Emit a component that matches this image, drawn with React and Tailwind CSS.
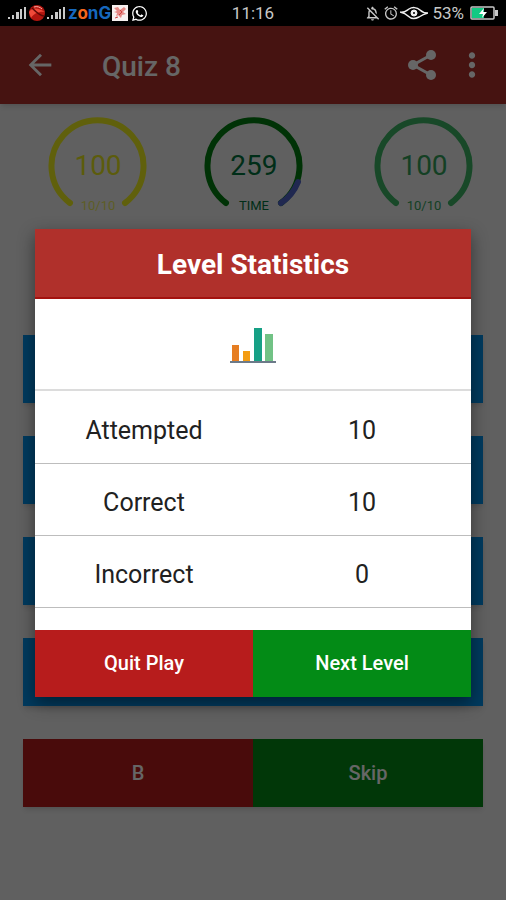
import React from "react";
import { MdAlarm, MdArrowBack, MdMoreVert, MdOutlineNotificationsOff } from "react-icons/md";
import { FaWhatsapp } from "react-icons/fa";

const gauges = [
  { value: "100", label: "10/10", color: "#f0f01e", textClass: "text-[#e6e61e]", labelClass: "opacity-70" },
  { value: "259", label: "TIME", color: "#007d0f", textClass: "text-[#00733c]", labelClass: "", rest: "#5064c8" },
  { value: "100", label: "10/10", color: "#3cb464", textClass: "text-[#32a05a]", labelClass: "" },
];

const stats = [
  { name: "Attempted", value: 10 },
  { name: "Correct", value: 10 },
  { name: "Incorrect", value: 0 },
];

const answers = ["A", "B", "C", "D"];

const Signal = () => (
  <svg viewBox="0 0 20 14" className="w-5 h-[14px]" fill="#c8c8c8">
    <rect x="1" y="11" width="2" height="2" />
    <rect x="5" y="9" width="2" height="4" />
    <rect x="9" y="6" width="3" height="7" />
    <rect x="13" y="3" width="2" height="10" />
    <rect x="17" y="1" width="2" height="12" />
  </svg>
);

const StatusBar = () => (
  <div className="relative h-[26px] bg-black text-[#c8c8c8] flex items-center justify-between pl-[7px] pr-2 shrink-0">
    <div className="flex items-center">
      <Signal />
      <svg viewBox="0 0 18 18" className="w-[18px] h-[18px] ml-px">
        <circle cx="9" cy="9" r="8" fill="#b3150f" />
        <path d="M1 8C5 3 10 4 17 8C12 7 6 9 3 14Z" fill="#f04a3a" />
        <path d="M4 4C8 8 12 12 16 12" stroke="#5d0805" strokeWidth="1.5" fill="none" />
        <path d="M6 3C9 2 12 3 14 5" stroke="#ffb4a8" strokeWidth="1" fill="none" />
      </svg>
      <Signal />
      <span className="ml-[2px] w-[43px] text-[17px] leading-5 font-bold text-[#1668bd] font-['Inter',sans-serif]">
        z<span className="text-[#f4661e]">o</span>nG
      </span>
      <svg viewBox="0 0 16 16" className="w-4 h-4 ml-px">
        <rect width="16" height="16" fill="#f6f0ef" />
        <path d="M2 3L6 2L8 5L12 2L14 4L11 7L14 9L10 10L9 13L6 10L4 12L5 8L2 7L5 6Z" fill="#e58a86" />
        <path d="M8 5L10 7L7 10M3 13L6 12" stroke="#cf3f3d" strokeWidth="1" fill="none" />
      </svg>
      <FaWhatsapp className="ml-[3px] text-white" size={17} />
    </div>
    <span className="absolute left-1/2 -translate-x-1/2 text-[17px] leading-5">11:16</span>
    <div className="flex items-center">
      <MdOutlineNotificationsOff size={17} />
      <MdAlarm size={16} className="ml-[2px]" />
      <svg viewBox="0 0 28 14" className="w-7 h-[14px] ml-px" fill="none" stroke="#f0f0f0">
        <path d="M0 6C4 7 6 5 9 3C12 1 17 1 20 4C22 6 25 7 28 7C24 8 22 9 19 11C15 13 11 13 8 10C6 8 4 7 0 6Z" strokeWidth="1.5" />
        <circle cx="14" cy="7" r="3" fill="#f0f0f0" />
        <circle cx="14" cy="7" r="1" fill="#000" stroke="none" />
      </svg>
      <span className="ml-1 text-[17px] leading-5">53%</span>
      <svg viewBox="0 0 28 14" className="w-7 h-[14px] ml-[6px]">
        <rect x="1" y="1" width="23" height="12" rx="1" fill="none" stroke="#c8c8c8" strokeWidth="1.5" />
        <rect x="25" y="4" width="3" height="6" fill="#c8c8c8" />
        <rect x="2" y="2" width="12" height="10" fill="#12c983" />
        <path d="M14 2L9 8H13L12 12L17 6H13Z" fill="#fff" />
      </svg>
    </div>
  </div>
);

const ShareIcon = () => (
  <svg viewBox="0 0 30 32" className="w-[30px] h-8" fill="currentColor" stroke="currentColor">
    <path d="M24 6L6 16L24 26" fill="none" strokeWidth="3" />
    <circle cx="6" cy="16" r="5" stroke="none" />
    <circle cx="24" cy="6" r="5" stroke="none" />
    <circle cx="24" cy="26" r="5" stroke="none" />
  </svg>
);

const Gauge = ({ gauge }) => (
  <div className={`relative w-[100px] h-[100px] flex items-center justify-center ${gauge.textClass}`}>
    <svg viewBox="0 0 100 100" className="absolute inset-0 w-full h-full" fill="none" strokeWidth="6" strokeLinecap="round">
      <path d="M22 87A46 46 0 1 1 77 87" stroke={gauge.color} />
      {gauge.rest && <path d="M94 66A46 46 0 0 1 77 87" stroke={gauge.rest} />}
    </svg>
    <span className="text-[28px] leading-8">{gauge.value}</span>
    <span className={`absolute bottom-[2px] inset-x-0 text-center text-[13px] leading-4 ${gauge.labelClass}`}>
      {gauge.label}
    </span>
  </div>
);

const ChartIcon = () => (
  <svg viewBox="0 0 46 38" className="w-[46px] h-[38px]">
    <rect x="2" y="18" width="7" height="17" fill="#e67e22" />
    <rect x="13" y="24" width="7" height="11" fill="#f39c12" />
    <rect x="24" y="1" width="8" height="34" fill="#16a085" />
    <rect x="35" y="7" width="8" height="28" fill="#71c285" />
    <rect x="0" y="34" width="46" height="2" fill="#6c7a89" />
  </svg>
);

const StatsDialog = () => (
  <div role="dialog" aria-labelledby="stats-title" className="w-full shadow-[0_6px_16px_rgba(0,0,0,0.45)]">
    <h2 id="stats-title" className="h-[70px] flex items-center justify-center pt-2 pb-1 bg-[#b0302b] border-b-2 border-[#a3120f] text-white text-[28px] leading-8 font-bold">
      Level Statistics
    </h2>
    <div className="bg-white">
      <div className="h-[92px] flex items-center justify-center pt-1 border-b-2 border-[#dcdcdc]">
        <ChartIcon />
      </div>
      <table className="w-full table-fixed text-center text-[25px] leading-8 text-[#212121]">
        <tbody>
          {stats.map((stat) => (
            <tr key={stat.name} className="h-[72px] border-b border-[#bdbdbd]">
              <th scope="row" className="font-normal pt-2">{stat.name}</th>
              <td className="pt-2">{stat.value}</td>
            </tr>
          ))}
        </tbody>
      </table>
      <div className="h-[22px]" />
    </div>
    <div className="grid grid-cols-2 h-[67px] text-white text-xl font-medium">
      <button type="button" className="bg-[#b71c1c]">Quit Play</button>
      <button type="button" className="bg-[#038b16]">Next Level</button>
    </div>
  </div>
);

const App = () => {
  return (
    <div className="min-h-screen flex flex-col bg-[#f0f0f0] font-['Roboto',sans-serif]">
      <StatusBar />
      <div className="relative flex-1 flex flex-col">
        <header className="h-[78px] flex items-center pl-[23px] pr-[15px] bg-[#ae302b] text-white shadow-md">
          <button type="button" aria-label="Back">
            <MdArrowBack size={34} />
          </button>
          <h1 className="ml-[45px] mt-1 flex-1 text-[28px] leading-8 font-medium">Quiz 8</h1>
          <button type="button" aria-label="Share">
            <ShareIcon />
          </button>
          <button type="button" aria-label="More" className="ml-4">
            <MdMoreVert size={38} />
          </button>
        </header>

        <div className="grid grid-cols-[11fr_12fr_7fr] pl-12 pr-8 pt-3">
          {gauges.map((gauge, idx) => (
            <Gauge key={idx} gauge={gauge} />
          ))}
        </div>

        <main className="flex flex-col gap-[33px] px-[23px] pt-[119px]">
          {answers.map((answer) => (
            <button key={answer} type="button" aria-label={answer} className="h-[68px] bg-[#0091ea] shadow-md" />
          ))}
          <div className="grid grid-cols-2 h-[68px] text-white text-xl font-medium shadow-md">
            <button type="button" className="bg-[#b71c1c]">B</button>
            <button type="button" className="bg-[#038b16]">Skip</button>
          </div>
        </main>

        <div className="absolute inset-0 flex items-center px-[35px] bg-black/60">
          <StatsDialog />
        </div>
      </div>
    </div>
  );
};

export default App;
